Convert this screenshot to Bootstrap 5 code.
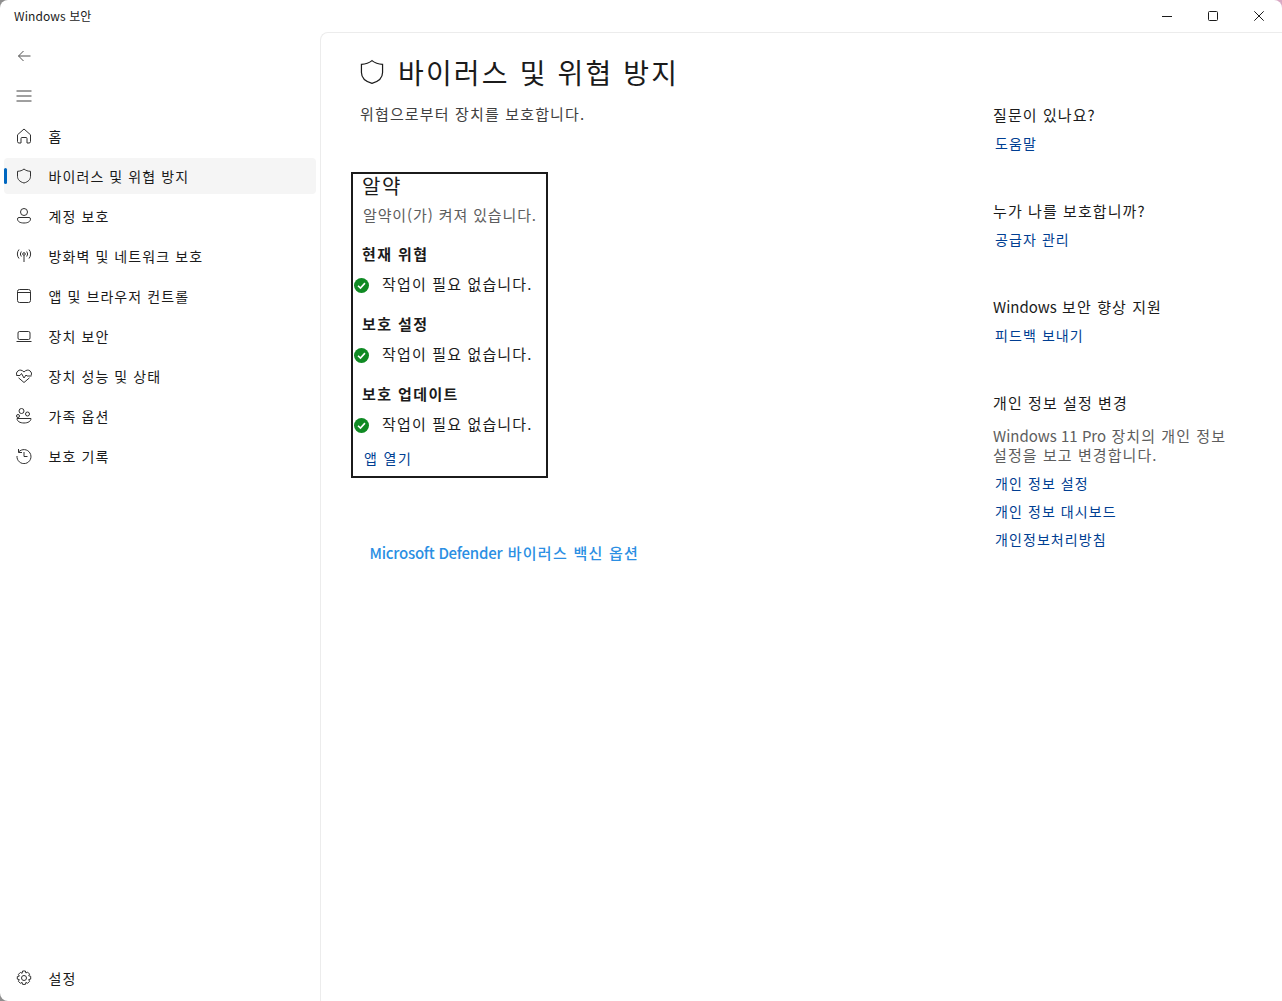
<!DOCTYPE html>
<html lang="ko">

<head>
    <meta charset="UTF-8">
    <meta name="viewport" content="width=device-width, initial-scale=1">
    <title>Windows 보안</title>
    <link href="https://cdn.jsdelivr.net/npm/bootstrap@5.3.2/dist/css/bootstrap.min.css" rel="stylesheet">
    <script src="https://cdn.jsdelivr.net/npm/bootstrap@5.3.2/dist/js/bootstrap.bundle.min.js"></script>
    <style>
        html, body {
            height: 100%;
            overflow: hidden;
            background: linear-gradient(to right, #8f8f8f, #d9a9c4);
        }

        body {
            font-family: "Noto Sans CJK KR", "Noto Sans", sans-serif;
            font-size: 14px;
            letter-spacing: 1.08px;
            color: #1b1b1b;
        }

        .lat {
            letter-spacing: 0;
        }

        .app-window {
            height: 1001px;
            background: #fff;
            border-radius: 8px 8px 0 8px;
            overflow: hidden;
        }

        .title-bar {
            height: 32px;
            padding-left: 14px;
            font-size: 12px;
            line-height: 32px;
            letter-spacing: .1px;
        }

        .win-btn {
            width: 46px;
            height: 32px;
        }

        .side-panel {
            width: 320px;
            height: 969px;
            padding: 6px 4px 1px;
        }

        .side-item {
            height: 36px;
            margin-bottom: 4px;
            border-radius: 4px;
            padding-left: 12px;
            color: #1b1b1b;
            text-decoration: none;
            position: relative;
            flex: none;
        }

        .side-item svg {
            width: 16px;
            height: 16px;
            margin-right: 16.5px;
            flex: none;
        }

        .side-item.selected {
            background: #f5f5f5;
        }

        .side-item.selected::before {
            content: "";
            position: absolute;
            left: 0;
            top: 10px;
            width: 3px;
            height: 16px;
            border-radius: 2px;
            background: #0067c0;
        }

        .content-panel {
            border-top: 1px solid #ececec;
            border-left: 1px solid #ececec;
            border-top-left-radius: 8px;
        }

        .main-col {
            width: 632px;
            padding-left: 30px;
        }

        .page-title {
            font-size: 28px;
            line-height: 40px;
            font-weight: 400;
            letter-spacing: 2.15px;
            margin: 19px 0 0 8px;
        }

        .page-title svg {
            margin-right: 13px;
        }

        .page-sub {
            margin: 12px 0 0 9px;
            font-size: 15px;
            line-height: 20px;
            letter-spacing: 1.15px;
            color: #404040;
        }

        .summary-box {
            width: 197px;
            height: 306px;
            margin-top: 48px;
            border: 2px solid #1b1b1b;
            padding-left: 9px;
            position: relative;
        }

        .sum-title {
            font-size: 20px;
            line-height: 24px;
            letter-spacing: 1.5px;
        }

        .sum-sub {
            font-size: 15px;
            line-height: 20px;
            letter-spacing: .88px;
            margin: 7px 0 19px 1px;
            color: #5d5d5d;
            white-space: nowrap;
        }

        .sum-head {
            font-size: 15px;
            line-height: 20px;
            font-weight: 700;
            letter-spacing: 1.4px;
        }

        .sum-row {
            font-size: 15px;
            line-height: 20px;
            letter-spacing: 1.15px;
            margin: 10px 0 20px;
            padding-left: 20px;
            position: relative;
            white-space: nowrap;
        }

        .sum-row svg {
            position: absolute;
            left: -8px;
            top: 4px;
            width: 15px;
            height: 15px;
        }

        .link-blue {
            color: #003e92;
            text-decoration: none;
        }

        .sum-open {
            display: block;
            margin: -6px 0 0 2px;
            line-height: 20px;
            letter-spacing: 1.4px;
        }

        .defender-link {
            display: block;
            margin: 63px 0 0 18.5px;
            font-size: 15px;
            line-height: 24px;
            font-weight: 500;
            letter-spacing: 1.25px;
            color: #2b8fe3;
            text-decoration: none;
        }

        .defender-link .lat {
            letter-spacing: -.25px;
        }

        .right-col {
            width: 330px;
            margin-left: 40px;
            padding-top: 71px;
        }

        .help-block {
            width: 250px;
            height: 96px;
        }

        .help-head {
            font-size: 15px;
            line-height: 22px;
            margin-bottom: 7px;
        }

        .help-text {
            font-size: 15px;
            line-height: 19px;
            color: #5d5d5d;
            margin: 12px 0 9px;
            white-space: nowrap;
        }

        .help-block a {
            display: block;
            margin-left: 2px;
            line-height: 20px;
            margin-bottom: 8px;
        }
    </style>
</head>

<body>
    <div class="app-window d-flex flex-column">
        <!-- titlebar -->
        <div class="title-bar d-flex justify-content-between flex-shrink-0">
            <span>Windows 보안</span>
            <div class="d-flex">
                <div class="win-btn d-flex align-items-center justify-content-center">
                    <svg width="10" height="10" viewBox="0 0 10 10"><path d="M0 5.500h10" stroke="#1b1b1b" fill="none"/></svg>
                </div>
                <div class="win-btn d-flex align-items-center justify-content-center">
                    <svg width="10" height="10" viewBox="0 0 10 10"><rect x=".5" y=".5" width="9" height="9" rx="1" stroke="#1b1b1b" fill="none"/></svg>
                </div>
                <div class="win-btn d-flex align-items-center justify-content-center">
                    <svg width="10" height="10" viewBox="0 0 10 10"><path d="M.3.3l9.400 9.400M9.700.3L.3 9.700" stroke="#1b1b1b" fill="none"/></svg>
                </div>
            </div>
        </div>

        <div class="d-flex flex-grow-1">
            <!-- menu -->
            <div class="side-panel d-flex flex-column flex-shrink-0">
                <a class="side-item d-flex align-items-center" href="#">
                    <svg viewBox="0 0 16 16" fill="none" stroke="#505050"><path d="M14.500 8h-12M7.500 3l-5 5 5 5"/></svg>
                </a>
                <a class="side-item d-flex align-items-center" href="#">
                    <svg viewBox="0 0 16 16" fill="none" stroke="#404040"><path d="M.5 3h15M.5 8h15M.5 13h15"/></svg>
                </a>
                <a class="side-item d-flex align-items-center" href="#">
                    <svg viewBox="0 0 16 16" fill="none" stroke="#303030"><path d="M1.500 6.800L8 1l6.500 5.800v6.700a1.500 1.500 0 0 1-1.500 1.500h-2V10.500a1 1 0 0 0-1-1H6a1 1 0 0 0-1 1V15H3a1.500 1.500 0 0 1-1.500-1.500z"/></svg>
                    <span>홈</span>
                </a>
                <a class="side-item selected d-flex align-items-center" href="#">
                    <svg viewBox="0 0 16 16" fill="none" stroke="#303030"><path d="M8 1c1.800 1.500 3.800 2.200 6.500 2.300v5c0 3.200-2.300 5.500-6.500 6.700-4.200-1.200-6.500-3.500-6.500-6.700v-5C4.200 3.200 6.200 2.500 8 1z"/></svg>
                    <span>바이러스 및 위협 방지</span>
                </a>
                <a class="side-item d-flex align-items-center" href="#">
                    <svg viewBox="0 0 16 16" fill="none" stroke="#303030"><circle cx="8" cy="4" r="3.500"/><path d="M3 9.500h10a1.500 1.500 0 0 1 1.500 1.500c0 2.500-2.500 4-6.500 4s-6.500-1.500-6.500-4A1.500 1.500 0 0 1 3 9.500z"/></svg>
                    <span>계정 보호</span>
                </a>
                <a class="side-item d-flex align-items-center" href="#">
                    <svg viewBox="0 0 16 16" fill="none" stroke="#303030"><circle cx="8" cy="6" r="1.300"/><path d="M8 7.500V14M5.300 8.500a4 4 0 0 1 0-5M10.700 3.500a4 4 0 0 1 0 5M3 10.500a7 7 0 0 1 0-9M13 1.500a7 7 0 0 1 0 9"/></svg>
                    <span>방화벽 및 네트워크 보호</span>
                </a>
                <a class="side-item d-flex align-items-center" href="#">
                    <svg viewBox="0 0 16 16" fill="none" stroke="#303030"><rect x="1.500" y="1.500" width="13" height="13" rx="2"/><path d="M1.500 4.500h13"/></svg>
                    <span>앱 및 브라우저 컨트롤</span>
                </a>
                <a class="side-item d-flex align-items-center" href="#">
                    <svg viewBox="0 0 16 16" fill="none" stroke="#303030"><rect x="2" y="3.500" width="12" height="8" rx="1.500"/><path d="M.5 13.500h15"/></svg>
                    <span>장치 보안</span>
                </a>
                <a class="side-item d-flex align-items-center" href="#">
                    <svg viewBox="0 0 16 16" fill="none" stroke="#303030"><path d="M2.500 9.800L8 14.500l5.500-4.700M.8 7.500a3.800 3.800 0 0 1 1-4.500c1.800-1.500 4.200-1.200 6.200 1 2-2.200 4.400-2.500 6.200-1a3.800 3.800 0 0 1 1 4.500"/><path d="M.5 7.500h3.500l1.500-2 2.500 4.500 2-3 1 1h4.500"/></svg>
                    <span>장치 성능 및 상태</span>
                </a>
                <a class="side-item d-flex align-items-center" href="#">
                    <svg viewBox="0 0 16 16" fill="none" stroke="#303030"><circle cx="5.500" cy="3" r="2.500"/><circle cx="11.500" cy="6" r="2"/><circle cx="2" cy="8" r="1.500"/><path d="M1 10.500h14c0 2.800-3 4.500-7 4.500s-7-1.700-7-4.500z"/></svg>
                    <span>가족 옵션</span>
                </a>
                <a class="side-item d-flex align-items-center" href="#">
                    <svg viewBox="0 0 16 16" fill="none" stroke="#303030"><path d="M2.700 4A7 7 0 1 1 1 8M2.500 1v3.500H6M8 4v4.500h3.500"/></svg>
                    <span>보호 기록</span>
                </a>
                <a class="side-item d-flex align-items-center mt-auto" href="#">
                    <svg viewBox="0 0 16 16" fill="none" stroke="#303030"><circle cx="8" cy="8" r="2.500"/><path d="M6.600 1h2.800l.5 2 1.700-.9 2 2-.9 1.700 2 .5v2.800l-2 .5.900 1.700-2 2-1.700-.9-.5 2H6.600l-.5-2-1.700.9-2-2 .9-1.700-2-.5V6.600l2-.5-.9-1.700 2-2 1.700.9z"/></svg>
                    <span>설정</span>
                </a>
            </div>

            <!-- page -->
            <div class="content-panel d-flex flex-grow-1">
                <div class="main-col flex-shrink-0">
                    <div class="page-title d-flex align-items-center">
                        <svg width="26" height="26" viewBox="0 0 16 16" fill="none" stroke="#1b1b1b" stroke-width=".75"><path d="M8 1c1.800 1.500 3.800 2.200 6.500 2.300v5c0 3.200-2.300 5.500-6.500 6.700-4.200-1.200-6.500-3.500-6.500-6.700v-5C4.200 3.200 6.200 2.500 8 1z"/></svg>
                        <span>바이러스 및 위협 방지</span>
                    </div>
                    <div class="page-sub">위협으로부터 장치를 보호합니다.</div>

                    <div class="summary-box">
                        <div class="sum-title">알약</div>
                        <div class="sum-sub">알약이(가) 켜져 있습니다.</div>
                        <div class="sum-head">현재 위협</div>
                        <div class="sum-row">
                            <svg viewBox="0 0 16 16"><circle cx="8" cy="8" r="8" fill="#0f8a23"/><path d="M4.300 8.300l2.600 2.500 4.800-5.300" stroke="#fff" stroke-width="1.700" fill="none"/></svg>
                            작업이 필요 없습니다.
                        </div>
                        <div class="sum-head">보호 설정</div>
                        <div class="sum-row">
                            <svg viewBox="0 0 16 16"><circle cx="8" cy="8" r="8" fill="#0f8a23"/><path d="M4.300 8.300l2.600 2.500 4.800-5.300" stroke="#fff" stroke-width="1.700" fill="none"/></svg>
                            작업이 필요 없습니다.
                        </div>
                        <div class="sum-head">보호 업데이트</div>
                        <div class="sum-row">
                            <svg viewBox="0 0 16 16"><circle cx="8" cy="8" r="8" fill="#0f8a23"/><path d="M4.300 8.300l2.600 2.500 4.800-5.300" stroke="#fff" stroke-width="1.700" fill="none"/></svg>
                            작업이 필요 없습니다.
                        </div>
                        <a class="sum-open link-blue" href="#">앱 열기</a>
                    </div>

                    <a class="defender-link" href="#"><span class="lat">Microsoft Defender</span> 바이러스 백신 옵션</a>
                </div>

                <div class="right-col">
                    <div class="help-block">
                        <div class="help-head">질문이 있나요?</div>
                        <a class="link-blue" href="#">도움말</a>
                    </div>
                    <div class="help-block">
                        <div class="help-head">누가 나를 보호합니까?</div>
                        <a class="link-blue" href="#">공급자 관리</a>
                    </div>
                    <div class="help-block">
                        <div class="help-head"><span class="lat">Windows</span> 보안 향상 지원</div>
                        <a class="link-blue" href="#">피드백 보내기</a>
                    </div>
                    <div class="help-block">
                        <div class="help-head">개인 정보 설정 변경</div>
                        <div class="help-text"><span class="lat">Windows 11 Pro</span> 장치의 개인 정보<br>설정을 보고 변경합니다.</div>
                        <a class="link-blue" href="#">개인 정보 설정</a>
                        <a class="link-blue" href="#">개인 정보 대시보드</a>
                        <a class="link-blue" href="#">개인정보처리방침</a>
                    </div>
                </div>
            </div>
        </div>
    </div>
</body>

</html>
